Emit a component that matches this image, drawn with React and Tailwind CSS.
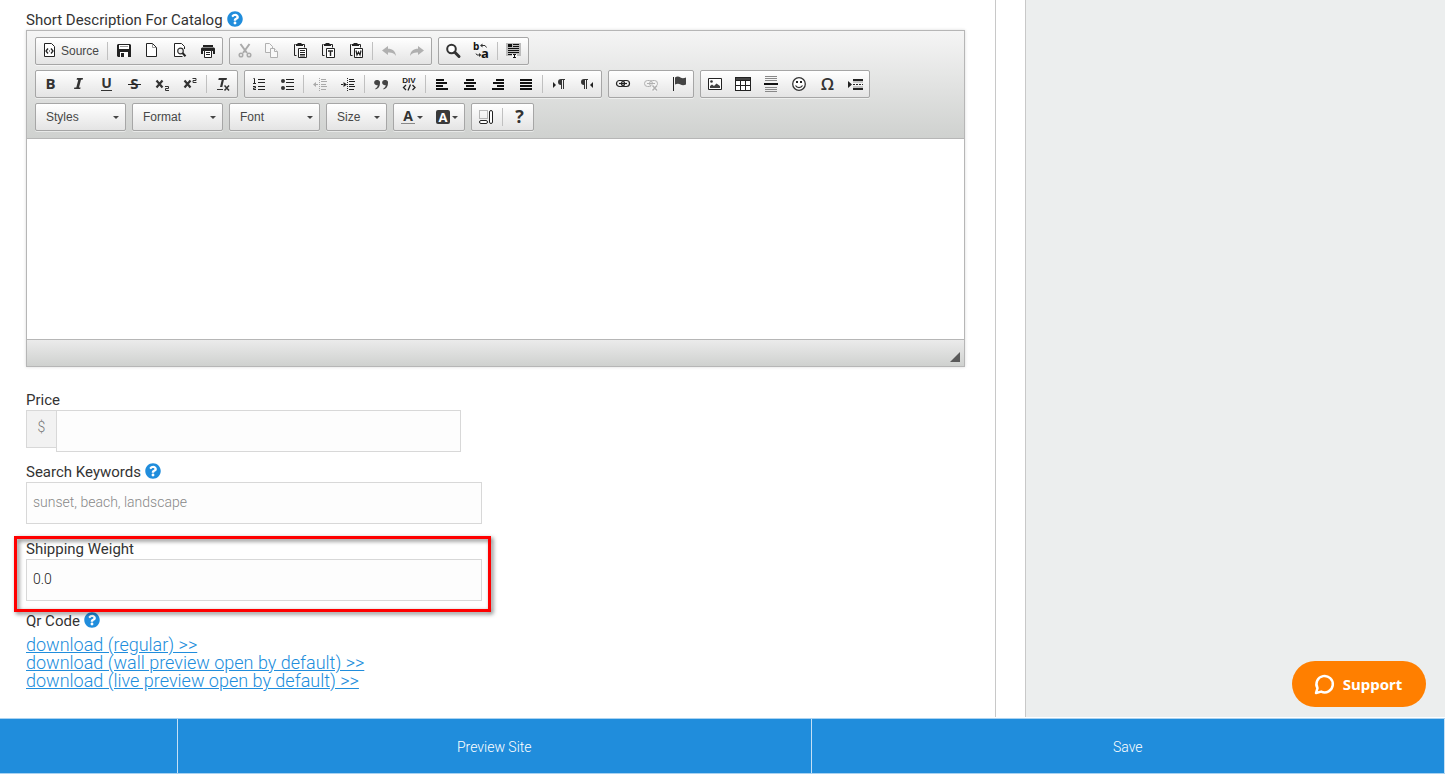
import { FaQuestionCircle } from 'react-icons/fa';

const SANS = 'Liberation Sans, Arial, sans-serif';

function Letter({ x, y, size, fill = '#333', weight = 'bold', font = 'Open Sans, sans-serif', anchor = 'start', children }) {
  return (
    <text x={x} y={y} fontSize={size} fontFamily={font} fontWeight={weight} textAnchor={anchor} fill={fill}>
      {children}
    </text>
  );
}

const clipboard = (
  <>
    <path d="M3.5 2.5h-1v11h2M10.5 2.5h2v3" fill="none" stroke="#222" />
    <path d="M4 2h1.5V1h4v1H11v2H4z" fill="#222" />
    <path d="M6.5 6.5h8v9h-8z" fill="#fff" stroke="#222" />
  </>
);

const alignBars = (bars) => (
  <path d={bars.map(([x, w], i) => `M${x} ${4 + i * 3}h${w}v2h-${w}z`).join('')} fill="#111" />
);

const chain = (
  <>
    <rect x="1.5" y="5.5" width="8" height="6" rx="3" />
    <rect x="6.5" y="5.5" width="8" height="6" rx="3" />
    <path d="M4 8.5h8" />
  </>
);

const icons = {
  source: (
    <>
      <path d="M2.5 1.5h7l3 3v10h-10z" fill="#fff" stroke="#222" />
      <path d="M6 6.5l-2 2.5 2 2.5M9 6.5l2 2.5-2 2.5" fill="none" stroke="#222" strokeWidth="1.3" />
      <path d="M7 8.5h1v1h-1z" fill="#222" />
    </>
  ),
  save: (
    <>
      <path d="M2 2h12l1 1v12H2l-1-1V3z" fill="#222" />
      <path d="M3 3h10v4H3zM4 10h8v5H4z" fill="#fff" />
      <path d="M5 11h3v4H5z" fill="#222" />
      <path d="M4 4.5h8" stroke="#999" />
    </>
  ),
  newpage: (
    <>
      <path d="M2.5 1.5h6l4 4v9h-10z" fill="#fff" stroke="#222" />
      <path d="M8.5 2v3.5H12" fill="none" stroke="#999" />
    </>
  ),
  preview: (
    <>
      <path d="M12.5 7V4.5l-3-3h-7v13h8" fill="#fff" stroke="#222" />
      <circle cx="8.5" cy="9" r="2.8" fill="#eee" stroke="#333" strokeWidth="1.2" />
      <path d="M10.5 11l3 3.2" stroke="#222" strokeWidth="2" />
    </>
  ),
  print: (
    <>
      <path d="M3 3h10v2H3zM1 6.5L2 5.5h12l1 1V12h-2V9H3v3H1z" fill="#222" />
      <path d="M4.5 8.5h7v7h-7z" fill="#fff" stroke="#222" />
      <path d="M6 10.5h4M6 12.5h4" stroke="#222" />
    </>
  ),
  cut: (
    <g fill="none" stroke="#aaa" strokeWidth="2">
      <path d="M4.5 2l6.5 9M13.5 2L7 11" />
      <circle cx="5" cy="13" r="1.8" strokeWidth="1.5" />
      <circle cx="13" cy="13" r="1.8" strokeWidth="1.5" />
    </g>
  ),
  copy: (
    <g fill="#f8f8f8" stroke="#b0b0b0">
      <path d="M1.5 1.5h4l3 3v6h-7z" />
      <path d="M6.5 6.5h4l3 3v6h-7z" />
      <path d="M10.5 6.5v3h3" />
    </g>
  ),
  paste: (
    <>
      {clipboard}
      <path d="M8 8.5h5M8 10.5h5M8 12.5h5M8 14h5" stroke="#222" />
    </>
  ),
  pastetext: (
    <>
      {clipboard}
      <path d="M8 9h5M10.5 9v5" stroke="#222" strokeWidth="1.4" />
    </>
  ),
  pasteword: (
    <>
      {clipboard}
      <path d="M8 8.5l1 4.5 1.5-3 1.5 3 1-4.5" fill="none" stroke="#222" strokeWidth="1.2" />
    </>
  ),
  undo: <path d="M1 8.5L7 4v2.7c4.5 0 7.500 2.300 8 7.300-2-3-4.500-3.700-8-3.500V13z" fill="#b0b0b0" />,
  redo: <path d="M15 8.500L9 4v2.700C4.500 6.700 1.500 9 1 14c2-3 4.500-3.700 8-3.500V13z" fill="#b0b0b0" />,
  find: (
    <>
      <circle cx="6.5" cy="7" r="4.3" fill="#fff" stroke="#333" strokeWidth="2" />
      <path d="M9.8 10.3l4.2 4.2" stroke="#333" strokeWidth="3" strokeLinecap="round" />
    </>
  ),
  replace: (
    <>
      <Letter x="0" y="8" size="10" fill="#111">b</Letter>
      <Letter x="8" y="16" size="13" fill="#111">a</Letter>
      <path d="M8 3.5h4l1.500 2M3 11.500l1 1.500h3" fill="none" stroke="#333" />
      <path d="M7 3.5l2.500-2v4zM8.500 13L6 11v4z" fill="#333" />
    </>
  ),
  selectall: (
    <>
      <path d="M0 1h15v13H0z" fill="#bbb" />
      <path d="M2 2h4v3H2zM7 2h6v1H7zM7 4h6v1H7zM2 6h11v1H2zM2 8h11v1H2zM2 10h11v1H2zM2 12h4v1H2z" fill="#111" />
      <path d="M6 12h5v4H6z" fill="#f4f4f4" />
      <path d="M7 12.5h3M8.5 12v4M7 15.5h3" stroke="#111" />
    </>
  ),
  bold: <Letter x="8.5" y="14" size="15" anchor="middle">B</Letter>,
  italic: <path d="M7 3h6l-.4 1.7H11L9 12.5h1.6L10.2 14H4l.4-1.5h1.9l2-7.8H6.600z" fill="#333" />,
  underline: (
    <>
      <Letter x="8.5" y="13" size="14" anchor="middle">U</Letter>
      <path d="M3 15h11v1H3z" fill="#333" />
    </>
  ),
  strike: (
    <>
      <Letter x="8.5" y="14" size="15" anchor="middle">S</Letter>
      <path d="M2 9h13v1H2z" fill="#222" />
    </>
  ),
  subscript: (
    <>
      <path d="M2.5 5.5l6 7M8.5 5.5l-6 7" stroke="#333" strokeWidth="2.2" />
      <path d="M11 11.5h3.5v2h-3v2H15" fill="none" stroke="#333" />
    </>
  ),
  superscript: (
    <>
      <path d="M2.5 5.5l6 7M8.5 5.5l-6 7" stroke="#333" strokeWidth="2.2" />
      <path d="M10.5 3.5H14v2h-3v2h3.5" fill="none" stroke="#333" />
    </>
  ),
  removeformat: (
    <>
      <path d="M3.8 3H12l-.5 2H8.900l-1.600 7H5l1.700-7H3.300z" fill="#333" />
      <path d="M2 14h6v1H2z" fill="#333" />
      <path d="M9.5 10.5l4.5 5M14 10.5l-4.500 5" stroke="#333" strokeWidth="1.5" />
    </>
  ),
  numbered: (
    <>
      <path d="M2.5 3.5h1v5M2 8.5h3M2 11.5h2.500v1.500h-2v1.500H5" fill="none" stroke="#222" />
      <path d="M7 4h7v1H7zM7 7h7v1H7zM7 11h7v1H7zM7 14h7v1H7z" fill="#222" />
    </>
  ),
  bulleted: (
    <>
      <circle cx="4" cy="6" r="2" fill="#333" />
      <circle cx="4" cy="13" r="2" fill="#333" />
      <path d="M7 4h8v1H7zM7 7h8v1H7zM7 11h8v1H7zM7 14h8v1H7z" fill="#222" />
    </>
  ),
  outdent: (
    <>
      <path d="M7.5 3v13" stroke="#aaa" strokeDasharray="1 1" />
      <path d="M9 4h5v1H9zM9 6h6v1H9zM9 9h5v1H9zM9 11h6v1H9zM9 14h5v1H9zM3 9h3v1H3zM1 9.500L4 7v5z" fill="#aaa" />
    </>
  ),
  indent: (
    <>
      <path d="M7.5 3v13" stroke="#222" strokeDasharray="1 1" />
      <path d="M9 4h5v1H9zM9 6h6v1H9zM9 9h5v1H9zM9 11h6v1H9zM9 14h5v1H9zM1 9h3v1H1zM7 9.500L3.500 7v5z" fill="#222" />
    </>
  ),
  quote: (
    <path
      d="M4 5a2.5 2.5 0 0 1 3 3c0 3.5-1.5 5.5-4.5 6.500v-1.200C4 12.500 4.700 11.500 4.700 10A2.600 2.600 0 1 1 4 5zM12 5a2.500 2.500 0 0 1 3 3c0 3.500-1.500 5.500-4.500 6.500v-1.200c1.500-.8 2.200-1.800 2.200-3.300A2.600 2.600 0 1 1 12 5z"
      fill="#444"
    />
  ),
  div: (
    <>
      <Letter x="8" y="8" size="8" font={SANS} anchor="middle" fill="#222">DIV</Letter>
      <path d="M5 10l-2.5 2.500L5 15M11.500 10l2.500 2.500-2.500 2.500M9.500 9.500l-2.500 6" fill="none" stroke="#222" strokeWidth="1.3" />
    </>
  ),
  left: alignBars([[2, 8], [2, 11], [2, 7], [2, 12]]),
  center: alignBars([[4, 8], [2, 12], [4, 8], [2, 12]]),
  right: alignBars([[6, 8], [3, 11], [7, 7], [2, 12]]),
  justify: alignBars([[2, 12], [2, 12], [2, 12], [2, 12]]),
  ltr: (
    <>
      <path d="M2 7l3 3-3 3z" fill="#222" />
      <path d="M14 4v1h-1v9h-1V5h-1v9h-1v-4a3 3 0 0 1 0-6z" fill="#333" />
    </>
  ),
  rtl: (
    <>
      <path d="M14 7l-3 3 3 3z" fill="#222" />
      <path d="M9 4v1H8v9H7V5H6v9H5v-4a3 3 0 0 1 0-6z" fill="#333" />
    </>
  ),
  link: <g fill="none" stroke="#222" strokeWidth="1.2">{chain}</g>,
  unlink: (
    <g fill="none" stroke="#b0b0b0">
      {chain}
      <path d="M9 10l5 5.5M14 10l-5 5.5" stroke="#f6f6f6" strokeWidth="3.5" />
      <path d="M9.5 10.5l4.5 5M14 10.5l-4.5 5" strokeWidth="1.5" />
    </g>
  ),
  flag: (
    <>
      <path d="M2 2h1v14H2z" fill="#222" />
      <path d="M4 2.5c2-1.500 4-1 5.500 0s3.500.8 5.500 0v7c-2 1-4 1-5.500 0S6 8.500 4 9.500z" fill="#444" />
    </>
  ),
  image: (
    <>
      <path d="M1.5 3.5h13v11h-13z" fill="#fff" stroke="#222" />
      <circle cx="4.5" cy="6.5" r="1.3" fill="#333" />
      <path d="M3 13v-2l2-1.5 2 1.500 2.500-2.500L13 11v2z" fill="#444" />
    </>
  ),
  table: (
    <>
      <path d="M0 2h16v14H0z" fill="#222" />
      <path d="M1 6h4v4H1zM6 6h4v4H6zM11 6h4v4h-4zM1 11h4v4H1zM6 11h4v4H6zM11 11h4v4h-4z" fill="#fff" />
      <path d="M1 3h14v2H1z" fill="#444" />
    </>
  ),
  rule: (
    <>
      <path d="M2 1h12v1H2zM2 3h12v1H2zM2 5h12v1H2zM2 12h12v1H2zM2 14h12v1H2zM2 16h12v1H2z" fill="#888" />
      <path d="M1 8h14v2H1z" fill="#111" />
    </>
  ),
  smiley: (
    <>
      <circle cx="8" cy="9" r="6.3" fill="#fff" stroke="#333" strokeWidth="1.3" />
      <path d="M5 6h2v2H5zM9 6h2v2H9z" fill="#222" />
      <path d="M4.5 10.5c1.500 2.700 5.500 2.700 7 0" fill="none" stroke="#333" strokeWidth="1.2" />
    </>
  ),
  omega: <Letter x="8.5" y="15" size="17" weight="600" anchor="middle">Ω</Letter>,
  pagebreak: (
    <>
      <path d="M1 6l4 3.5L1 13zM6 4h10v2H6zM6 13h10v2H6z" fill="#222" />
      <path d="M6 7h10M6 12h10" stroke="#999" />
      <path d="M6 9.5h10" stroke="#222" strokeDasharray="2 1" />
    </>
  ),
  textcolor: (
    <>
      <Letter x="8" y="13" size="14" anchor="middle">A</Letter>
      <path d="M1 15h14v1H1z" fill="#888" />
    </>
  ),
  bgcolor: (
    <>
      <rect x="1" y="2" width="14" height="14" rx="2" fill="#3a3a3a" />
      <Letter x="8" y="14" size="13" anchor="middle" fill="#fff">A</Letter>
    </>
  ),
  blocks: (
    <>
      <path d="M1.5 2.5h8v8h-8z" fill="none" stroke="#777" strokeDasharray="1 1" />
      <rect x="1.5" y="12.5" width="8" height="3" rx="1.5" fill="#fff" stroke="#222" />
      <rect x="11.5" y="2.5" width="3" height="13" rx="1.5" fill="#fff" stroke="#222" />
    </>
  ),
  about: <Letter x="8.5" y="15" size="18" anchor="middle">?</Letter>,
};

// '|' is a separator inside a group
const firstRow = [
  ['source', '|', 'save', 'newpage', 'preview', 'print'],
  ['cut', 'copy', 'paste', 'pastetext', 'pasteword', '|', 'undo', 'redo'],
  ['find', 'replace', '|', 'selectall'],
];

const secondRow = [
  ['bold', 'italic', 'underline', 'strike', 'subscript', 'superscript', '|', 'removeformat'],
  ['numbered', 'bulleted', '|', 'outdent', 'indent', '|', 'quote', 'div', '|', 'left', 'center', 'right', 'justify', '|', 'ltr', 'rtl'],
  ['link', 'unlink', 'flag'],
  ['image', 'table', 'rule', 'smiley', 'omega', 'pagebreak'],
];

const links = [
  'download (regular) >>',
  'download (wall preview open by default) >>',
  'download (live preview open by default) >>',
];

const boxStyle = 'flex h-7 rounded-xs border border-[#a6a6a6] bg-linear-to-b from-white to-[#e4e4e4] shadow-[0_1px_0_rgba(255,255,255,0.5)]';
const inputStyle = 'h-[42px] border border-[#d8d8d8] bg-[#fdfdfd] px-1.5 pb-0.5 text-sm outline-none';

function Arrow() {
  return (
    <svg width="6" height="3" viewBox="0 0 6 3" className="pointer-events-none shrink-0" aria-hidden="true">
      <path d="M0 0h6L3 3z" fill="#444" />
    </svg>
  );
}

function ToolButton({ name }) {
  const menu = name === 'textcolor' || name === 'bgcolor';
  return (
    <button type="button" aria-label={name} className={menu ? 'flex w-[35px] items-center gap-px pl-1.5' : 'flex items-center px-1.5'}>
      <svg width="16" height="18" viewBox="0 0 16 18" className="shrink-0 overflow-visible" aria-hidden="true">
        {icons[name]}
      </svg>
      {name === 'source' && <span className="w-[41px] pl-[3px] text-left">Source</span>}
      {menu && <Arrow />}
    </button>
  );
}

function ToolGroup({ items }) {
  return (
    <div className={boxStyle}>
      {items.map((name, i) =>
        name === '|' ? (
          <span key={i} className="mx-0.5 mt-1 h-[18px] w-px bg-[#c0c0c0]" />
        ) : (
          <ToolButton key={i} name={name} />
        )
      )}
    </div>
  );
}

function Combo({ label, small }) {
  return (
    <div className={`${boxStyle} items-center ${small ? 'w-[61px]' : 'w-[91px]'}`}>
      <select aria-label={label} className="h-full w-full appearance-none pl-2.5 outline-none">
        <option>{label}</option>
      </select>
      <span className="-ml-3 pr-1.5">
        <Arrow />
      </span>
    </div>
  );
}

function Editor() {
  return (
    <div className="border border-[#b6b6b6] shadow-[0_0_3px_rgba(0,0,0,0.15)]">
      <div
        className="flex flex-col gap-[5px] border-b border-[#b6b6b6] bg-linear-to-b from-[#f5f5f5] to-[#cfd1cf] px-2 pt-1.5 pb-[7px] text-xs text-[#474747]"
        style={{ fontFamily: SANS }}
      >
        <div className="flex gap-1.5">
          {firstRow.map((items, i) => <ToolGroup key={i} items={items} />)}
        </div>
        <div className="flex gap-1.5">
          {secondRow.map((items, i) => <ToolGroup key={i} items={items} />)}
        </div>
        <div className="flex gap-1.5">
          <Combo label="Styles" />
          <Combo label="Format" />
          <Combo label="Font" />
          <Combo label="Size" small />
          <ToolGroup items={['textcolor', 'bgcolor']} />
          <ToolGroup items={['blocks', '|', 'about']} />
        </div>
      </div>
      <textarea id="description" className="block h-[200px] w-full resize-none p-5 outline-none" />
      <div className="flex h-[27px] items-end justify-end border-t border-[#b6b6b6] bg-linear-to-b from-[#ebebeb] to-[#cfd1cf] p-1">
        <svg width="10" height="10" viewBox="0 0 10 10" aria-hidden="true">
          <path d="M10 0v10H0z" fill="#5a5a5a" />
        </svg>
      </div>
    </div>
  );
}

function Label({ htmlFor, help, children }) {
  return (
    <div className="flex h-5 items-start gap-1 text-[15px] leading-5 text-[#333]">
      <label htmlFor={htmlFor}>{children}</label>
      {help && (
        <button type="button" aria-label="Help" className="pt-px text-[#208ddc]">
          <FaQuestionCircle size={16} />
        </button>
      )}
    </div>
  );
}

export default function App() {
  return (
    <div className="flex h-screen flex-col bg-white font-[Roboto,sans-serif]">
      <div className="flex min-h-0 flex-1">
        <main className="mr-[29px] min-w-0 flex-1 border-r border-[#c8c8c8] pt-2.5 pr-[30px] pl-[26px]">
          <Label htmlFor="description" help>Short Description For Catalog</Label>
          <Editor />

          <div className="mt-[23px]">
            <Label htmlFor="price">Price</Label>
            <div className="flex max-w-[435px] items-start">
              <span className="flex h-[38px] w-[30px] items-center justify-center border border-r-0 border-[#d8d8d8] bg-[#f2f2f2] pb-1 text-sm font-light text-[#777]">
                $
              </span>
              <input id="price" type="text" className={`${inputStyle} min-w-0 flex-1`} />
            </div>
          </div>

          <div className="mt-2.5 max-w-[456px]">
            <Label htmlFor="keywords" help>Search Keywords</Label>
            <input
              id="keywords"
              type="text"
              placeholder="sunset, beach, landscape"
              className={`${inputStyle} block w-full font-light placeholder:text-[#888]`}
            />
          </div>

          <div className="relative mt-[15px] max-w-[456px]">
            <Label htmlFor="weight">Shipping Weight</Label>
            <input id="weight" type="text" defaultValue="0.0" className={`${inputStyle} block w-full font-light text-[#222]`} />
            <div className="pointer-events-none absolute -top-[3px] -right-[9px] -bottom-[11px] -left-3 border-3 border-[#f00] drop-shadow-[2px_2px_2px_rgba(0,0,0,0.55)]" />
          </div>

          <div className="mt-2.5">
            <Label help>Qr Code</Label>
            <ul className="mt-[5px] text-lg leading-[18px] font-light text-[#208ddc]">
              {links.map((text) => (
                <li key={text}>
                  <a href="#" className="underline">{text}</a>
                </li>
              ))}
            </ul>
          </div>
        </main>
        <aside className="w-[420px] shrink-0 border-l border-[#c8c8c8] bg-[#eceeee]" />
      </div>

      <footer className="mt-px flex h-14 shrink-0 border-y border-[#a9d2f1] bg-[#208ddc] text-sm font-light text-white">
        <div className="w-[178px] border-r border-[#c5e0f5]" />
        <button type="button" className="flex-1 border-r border-[#c5e0f5] pt-0.5">Preview Site</button>
        <button type="button" className="flex-1 border-r border-[#c5e0f5] pt-0.5">Save</button>
      </footer>

      <button
        type="button"
        className="fixed right-[19px] bottom-[67px] flex h-[46px] w-[134px] items-center justify-center gap-2 rounded-full bg-[#ff7f00] pr-0.5 font-['Noto_Sans',sans-serif] text-[15px] font-bold text-white"
      >
        <svg width="21" height="22" viewBox="0 0 21 22" fill="none" stroke="#fff" strokeWidth="2.5" strokeLinejoin="round" aria-hidden="true">
          <path d="M3.5 15.2A8.200 8.200 0 1 1 7.200 18.600L2 20z" />
        </svg>
        Support
      </button>
    </div>
  );
}
